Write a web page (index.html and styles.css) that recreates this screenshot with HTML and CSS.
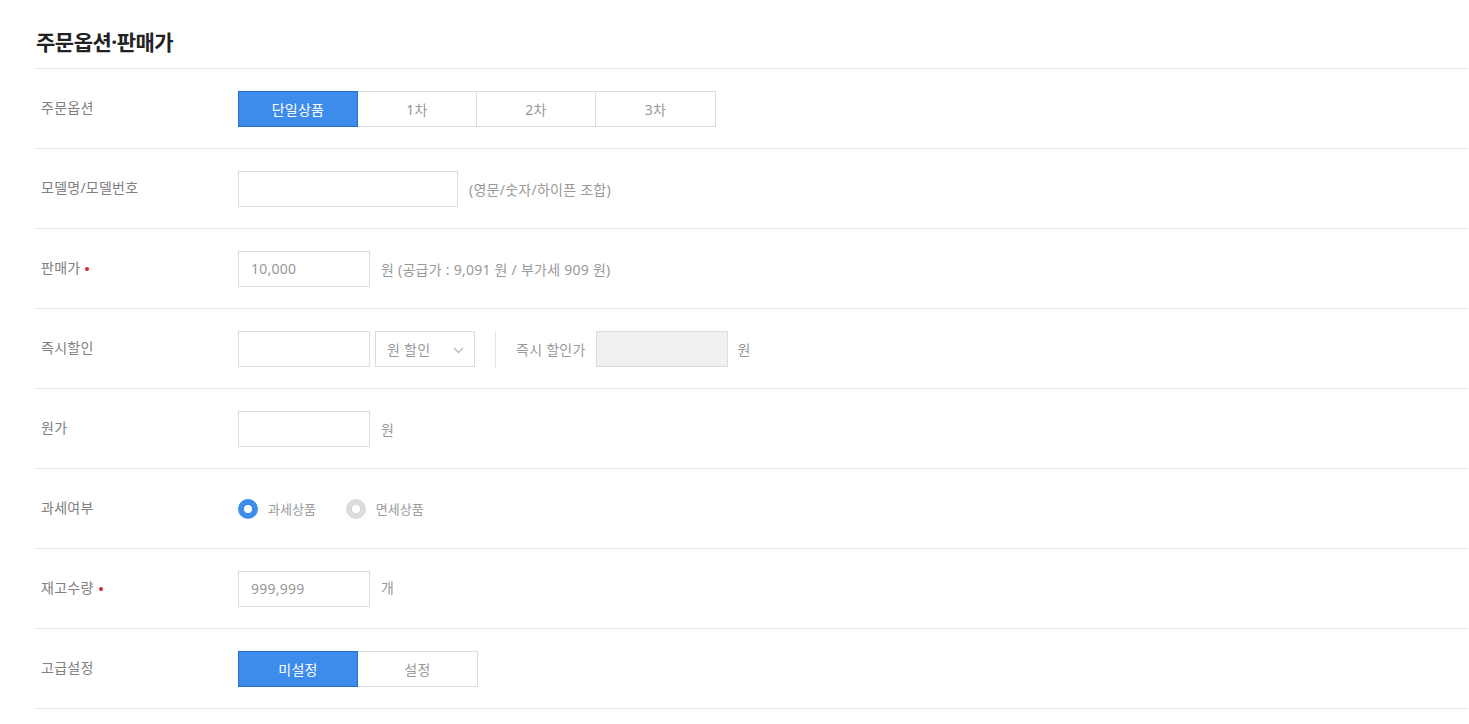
FILE: index.html
```html
<!DOCTYPE html>
<html lang="ko">
<head>
<meta charset="utf-8">
<link rel="stylesheet" href="styles.css">
</head>
<body>
<div class="page">
  <div class="header"><h2 class="title">주문옵션·판매가</h2></div>

  <div class="row">
    <div class="label">주문옵션</div>
    <div class="ctrl">
      <div class="seg">
        <button class="seg-btn on">단일상품</button>
        <button class="seg-btn w119">1차</button>
        <button class="seg-btn w119">2차</button>
        <button class="seg-btn">3차</button>
      </div>
    </div>
  </div>

  <div class="row">
    <div class="label">모델명/모델번호</div>
    <div class="ctrl">
      <div class="input wide"></div>
      <span class="note">(영문/숫자/하이픈 조합)</span>
    </div>
  </div>

  <div class="row">
    <div class="label">판매가<span class="req"></span></div>
    <div class="ctrl">
      <div class="input">10,000</div>
      <span class="note">원 (공급가 : 9,091 원 / 부가세 909 원)</span>
    </div>
  </div>

  <div class="row">
    <div class="label">즉시할인</div>
    <div class="ctrl">
      <div class="input"></div>
      <div class="select">원 할인
        <svg class="chev" width="11" height="7" viewBox="0 0 11 7"><path d="M1 1l4.5 4.5L10 1" fill="none" stroke="#bbb" stroke-width="1.4"/></svg>
      </div>
      <span class="divider"></span>
      <span class="sub">즉시 할인가</span>
      <div class="input disabled"></div>
      <span class="note n10">원</span>
    </div>
  </div>

  <div class="row">
    <div class="label">원가</div>
    <div class="ctrl">
      <div class="input"></div>
      <span class="note">원</span>
    </div>
  </div>

  <div class="row">
    <div class="label">과세여부</div>
    <div class="ctrl">
      <label class="radio"><span class="dot on"></span>과세상품</label>
      <label class="radio"><span class="dot"></span>면세상품</label>
    </div>
  </div>

  <div class="row">
    <div class="label">재고수량<span class="req"></span></div>
    <div class="ctrl">
      <div class="input">999,999</div>
      <span class="note up">개</span>
    </div>
  </div>

  <div class="row">
    <div class="label">고급설정</div>
    <div class="ctrl">
      <div class="seg">
        <button class="seg-btn on">미설정</button>
        <button class="seg-btn">설정</button>
      </div>
    </div>
  </div>
</div>
</body>
</html>
```
FILE: styles.css
```css
* { box-sizing: border-box; }
html, body { margin: 0; padding: 0; background: #fff; }
body {
  font-family: "Noto Sans", "Noto Sans CJK KR", sans-serif;
  font-size: 14px;
  color: #808080;
  letter-spacing: 0.25px;
}
.page { padding-left: 36px; padding-right: 1px; }
.header {
  height: 69px;
  border-bottom: 1px solid #e6e6e6;
  display: flex;
  align-items: flex-start;
}
.title {
  margin: 0;
  padding-top: 28px;
  font-size: 21px;
  line-height: 28px;
  font-weight: 700;
  color: #222;
  letter-spacing: -0.5px;
}
.row {
  height: 80px;
  border-bottom: 1px solid #e6e6e6;
  display: flex;
  align-items: center;
}
.label {
  width: 202px;
  padding-left: 5px;
  color: #808080;
  display: flex;
  align-items: center;
  line-height: 20px;
  position: relative;
  top: -1px;
}
.req {
  width: 4px; height: 4px; border-radius: 50%;
  background: #e0202c;
  margin-left: 5px;
  margin-top: 2px;
}
.ctrl { display: flex; align-items: center; }
.seg { display: flex; }
.seg-btn {
  width: 120px; height: 36px;
  border: 1px solid #dcdcdc;
  border-left: none;
  background: #fff;
  color: #999;
  font: inherit;
  font-size: 14px;
  letter-spacing: 0.25px;
  padding: 0;
}
.seg-btn:first-child { border-left: 1px solid #dcdcdc; }
.seg-btn.w119 { width: 119px; }
.seg-btn.on {
  background: #3d8cec;
  border: 1px solid #2b6fc4;
  color: #fff;
}
.input {
  width: 132px; height: 36px;
  border: 1px solid #dcdcdc;
  padding-left: 12px;
  display: flex; align-items: center;
  color: #999;
}
.input.wide { width: 220px; }
.input.disabled { background: #f0f0f0; }
.note { margin-left: 11px; color: #999; }
.note.n10 { margin-left: 10px; }
.note.up { position: relative; top: -2px; }
.select {
  width: 100px; height: 36px;
  margin-left: 5px;
  border: 1px solid #dcdcdc;
  padding-left: 11px;
  display: flex; align-items: center;
  color: #999;
  position: relative;
}
.chev { position: absolute; left: 77px; top: 15px; }
.divider {
  width: 1px; height: 36px; background: #e6e6e6;
  margin-left: 20px; margin-right: 20px;
}
.sub { color: #999; margin-right: 10px; }
.radio {
  display: flex; align-items: center;
  color: #999; font-size: 13px;
  margin-right: 30px;
  letter-spacing: 0;
}
.dot {
  width: 20px; height: 20px; border-radius: 50%;
  border: 6px solid #dcdcdc;
  background: #fff;
  margin-right: 10px;
}
.dot.on { border-color: #3d8cec; }
```
